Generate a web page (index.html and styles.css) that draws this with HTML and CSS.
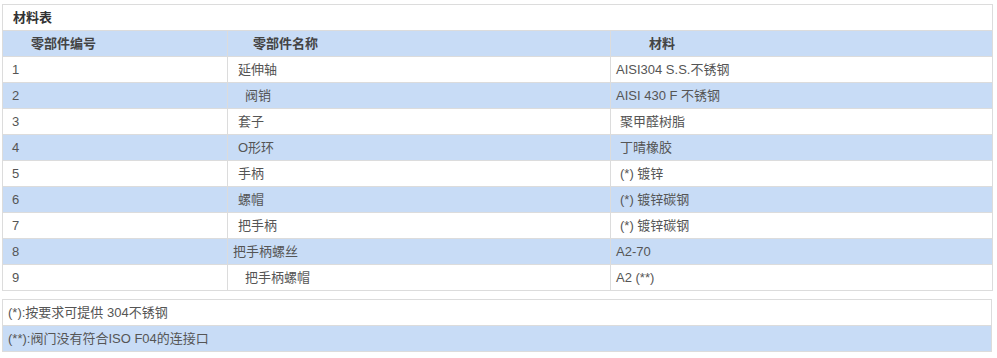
FILE: index.html
```html
<!DOCTYPE html>
<html lang="zh">
<head>
<meta charset="utf-8">
<link rel="stylesheet" href="styles.css">
</head>
<body>
<table class="mat">
  <colgroup><col class="c1"><col class="c2"><col class="c3"></colgroup>
  <tr class="title"><td colspan="3">材料表</td></tr>
  <tr class="head blue"><th class="h1">零部件编号</th><th class="h2">零部件名称</th><th class="h3">材料</th></tr>
  <tr><td>1</td><td>延伸轴</td><td class="m">AISI304 S.S.不锈钢</td></tr>
  <tr class="blue"><td>2</td><td class="in2">阀销</td><td class="m">AISI 430 F 不锈钢</td></tr>
  <tr><td>3</td><td>套子</td><td class="m in1">聚甲醛树脂</td></tr>
  <tr class="blue"><td>4</td><td>O形环</td><td class="m in1">丁晴橡胶</td></tr>
  <tr><td>5</td><td>手柄</td><td class="m in1">(*) 镀锌</td></tr>
  <tr class="blue"><td>6</td><td>螺帽</td><td class="m in1">(*) 镀锌碳钢</td></tr>
  <tr><td>7</td><td>把手柄</td><td class="m in1">(*) 镀锌碳钢</td></tr>
  <tr class="blue"><td>8</td><td class="out">把手柄螺丝</td><td class="m">A2-70</td></tr>
  <tr><td>9</td><td class="in2">把手柄螺帽</td><td class="m">A2 (**)</td></tr>
</table>
<table class="notes">
  <tr><td>(*):按要求可提供 304不锈钢</td></tr>
  <tr class="blue"><td>(**):阀门没有符合ISO F04的连接口</td></tr>
</table>
</body>
</html>
```
FILE: styles.css
```css
html, body {
  margin: 0;
  padding: 0;
  background: #fff;
}
body {
  padding: 4px 5px 0 2px;
  font-family: "Liberation Sans", "Noto Sans CJK SC", sans-serif;
  font-size: 13px;
  color: #555;
}
table {
  border-collapse: collapse;
  width: 990px;
  table-layout: fixed;
}
.c1 { width: 225px; }
.c2 { width: 383px; }
.c3 { width: 382px; }
td, th {
  border: 1px solid #dcdcdc;
  height: 25px;
  padding: 0 0 0 9px;
  vertical-align: middle;
  text-align: left;
  font-weight: normal;
  line-height: 16px;
}
td:nth-child(2) { padding-left: 10px; }
td.m { padding-left: 5px; }
td.m.in1 { padding-left: 9px; }
td.in2 { padding-left: 17px; }
td.out { padding-left: 5px; }
.blue td, .blue th { background: #c8dcf6; }
.title td {
  font-weight: bold;
  color: #333;
  padding-left: 10px;
}
.head th {
  font-weight: bold;
  color: #444;
}
.head th.h1 { padding-left: 28px; }
.head th.h2 { padding-left: 25px; }
.head th.h3 { padding-left: 38px; }
.notes {
  margin-top: 8px;
}
.notes td { padding-left: 5px; }
```
